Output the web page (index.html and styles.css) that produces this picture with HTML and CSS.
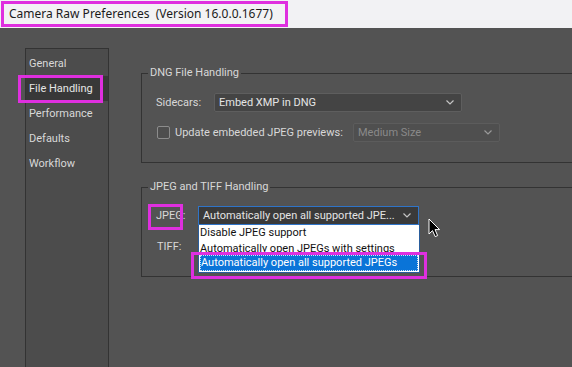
FILE: index.html
```html
<!DOCTYPE html>
<html lang="en">
<head>
    <meta charset="UTF-8">
    <title>Camera Raw Preferences</title>
    <link rel="stylesheet" href="styles.css">
</head>
<body>
<div class="titlebar">
    <span class="title">Camera Raw Preferences&nbsp; (Version 16.0.0.1677)</span>
</div>
<div class="window">
    <ul class="sidebar">
        <li>General</li>
        <li class="selected">File Handling<span class="mark mark-nav"></span></li>
        <li>Performance</li>
        <li>Defaults</li>
        <li>Workflow</li>
    </ul>
    <div class="panel">
        <fieldset class="group group-dng">
            <legend>DNG File Handling</legend>
            <div class="row">
                <span class="label label-sidecars">Sidecars:</span>
                <div class="select select-sidecars">
                    <span>Embed XMP in DNG</span>
                    <svg class="chevron" width="8" height="5" viewBox="0 0 8 5"><polyline points="0.5,0.5 4,4 7.5,0.5" fill="none" stroke="#c4c4c4" stroke-width="1.2"/></svg>
                </div>
            </div>
            <div class="row row-check">
                <span class="checkbox"></span>
                <span class="label label-update">Update embedded JPEG previews:</span>
                <div class="select select-disabled">
                    <span>Medium Size</span>
                    <svg class="chevron" width="8" height="5" viewBox="0 0 8 5"><polyline points="0.5,0.5 4,4 7.5,0.5" fill="none" stroke="#9a9a9a" stroke-width="1.2"/></svg>
                </div>
            </div>
        </fieldset>
        <fieldset class="group group-jpeg">
            <legend>JPEG and TIFF Handling</legend>
            <div class="row">
                <span class="label label-jpeg">JPEG:<span class="mark mark-jpeg"></span></span>
                <div class="select select-open">
                    <span>Automatically open all supported JPE...</span>
                    <svg class="chevron" width="8" height="5" viewBox="0 0 8 5"><polyline points="0.5,0.5 4,4 7.5,0.5" fill="none" stroke="#c4c4c4" stroke-width="1.2"/></svg>
                    <ul class="dropdown">
                        <li>Disable JPEG support</li>
                        <li class="clipped">Automatically open JPEGs with settings</li>
                        <li class="active">Automatically open all supported JPEGs</li>
                        <span class="mark mark-option"></span>
                    </ul>
                    <svg class="cursor" width="13" height="20" viewBox="0 0 13 20">
                        <path d="M1,1 L1,16 L4.5,12.6 L7.2,18.6 L9.6,17.6 L7,11.6 L11.6,11.6 Z" fill="#000" stroke="#fff" stroke-width="1"/>
                    </svg>
                </div>
            </div>
            <div class="row row-tiff">
                <span class="label label-tiff">TIFF:</span>
            </div>
        </fieldset>
    </div>
</div>
</body>
</html>
```

FILE: styles.css
```css
html, body {
    margin: 0;
    height: 100%;
}
body {
    font-family: Roboto, "Liberation Sans", sans-serif;
    font-size: 11px;
    color: #d8d8d8;
    background-color: #535353;
    overflow: hidden;
}
.titlebar {
    height: 28px;
    background-color: #f2f2f4;
    box-sizing: border-box;
    padding: 1px 0 0 1px;
}
.title {
    display: inline-block;
    box-sizing: border-box;
    width: 287px;
    height: 26px;
    line-height: 20px;
    padding-left: 5px;
    border: 3px solid #df2fdf;
    color: #1b1b1b;
    font-family: "Noto Sans", sans-serif;
    font-size: 12px;
    white-space: nowrap;
}
.window {
    display: flex;
    height: calc(100% - 28px);
}
.sidebar {
    list-style: none;
    margin: 20px 0 0 25px;
    padding: 2px 0 0 0;
    width: 84px;
    box-sizing: border-box;
    background-color: #4c4c4c;
    border: 1px solid #333;
    border-bottom: none;
}
.sidebar li {
    position: relative;
    height: 25px;
    line-height: 25px;
    padding-left: 3px;
    white-space: nowrap;
}
.sidebar li.selected {
    background-color: #383838;
    color: #e6e6e6;
}
.mark {
    position: absolute;
    box-sizing: border-box;
    border: 3px solid #df2fdf;
    pointer-events: none;
}
.mark-nav {
    left: -8px;
    top: -1px;
    width: 85px;
    height: 28px;
}
.panel {
    flex: 1;
    padding: 38px 0 0 32px;
}
.group {
    margin: 0;
    padding: 0 0 21px 6px;
    border: 1px solid #333;
    border-right: none;
    min-width: 0;
}
.group legend {
    padding: 0 2px;
    line-height: 14px;
    white-space: nowrap;
}
.group-dng {
    padding-top: 13px;
}
.group-jpeg {
    margin-top: 17px;
    padding-top: 12px;
}
.row {
    display: flex;
    align-items: center;
    height: 18px;
    margin-left: 8px;
}
.row-check {
    margin-top: 12px;
    margin-left: 9px;
}
.row-tiff {
    margin-top: 13px;
    margin-left: 9px;
}
.label {
    position: relative;
    white-space: nowrap;
}
.label-sidecars {
    width: 58px;
}
.label-update {
    width: 178px;
}
.label-jpeg {
    width: 42px;
}
.mark-jpeg {
    left: -8px;
    top: -5px;
    width: 35px;
    height: 26px;
}
.checkbox {
    width: 13px;
    height: 13px;
    box-sizing: border-box;
    border: 1px solid #8c8c8c;
    border-radius: 2px;
    background-color: #4e4e4e;
    margin-right: 5px;
}
.select {
    position: relative;
    display: flex;
    align-items: center;
    justify-content: space-between;
    box-sizing: border-box;
    height: 19px;
    padding: 0 7px 0 4px;
    background-color: #444;
    border: 1px solid #5e5e5e;
    border-radius: 2px;
    color: #e4e4e4;
    white-space: nowrap;
}
.select-sidecars {
    width: 248px;
}
.select-disabled {
    width: 147px;
    background-color: #4f4f4f;
    border-color: #5c5c5c;
    color: #8a8a8a;
}
.select-open {
    width: 221px;
    background-color: #3a3a3a;
    border-color: #2f74c8;
    border-radius: 0;
}
.chevron {
    flex: none;
}
.dropdown {
    position: absolute;
    left: -1px;
    top: 18px;
    width: 222px;
    box-sizing: border-box;
    margin: 0;
    padding: 0;
    list-style: none;
    background-color: #fff;
    border: 1px solid #2a5d9c;
    border-top: none;
    color: #111;
    z-index: 2;
}
.dropdown li {
    height: 16px;
    line-height: 16px;
    padding-left: 1px;
    overflow: hidden;
}
.dropdown li.clipped {
    height: 14px;
}
.dropdown li.active {
    margin: 0 1px 1px;
    background-color: #0a74d8;
    color: #fff;
    outline: 1px dotted #cfe3f8;
    outline-offset: -1px;
}
.mark-option {
    left: -8px;
    top: 27px;
    width: 236px;
    height: 27px;
}
.cursor {
    position: absolute;
    left: 229px;
    top: 11px;
    z-index: 3;
}
```
